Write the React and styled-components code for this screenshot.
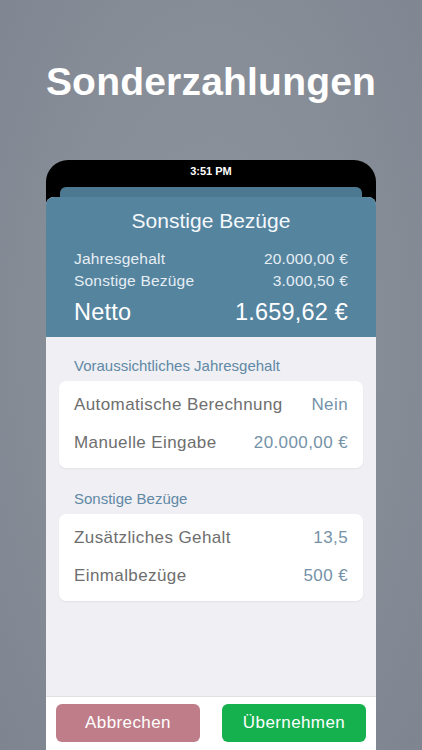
import React from 'react';
import styled, { createGlobalStyle } from 'styled-components';

const GlobalStyle = createGlobalStyle`
  html, body {
    margin: 0;
    padding: 0;
    height: 100%;
  }
  body {
    background: radial-gradient(ellipse at 50% 45%, #8e949e 0%, #878d97 55%, #7f8590 100%);
    font-family: "Liberation Sans", Arial, sans-serif;
    overflow: hidden;
  }
`;

const Page = styled.div`
  width: 422px;
  height: 750px;
  display: flex;
  flex-direction: column;
  align-items: center;
  overflow: hidden;
`;

const Headline = styled.h1`
  margin: 0;
  padding-top: 59px;
  height: 160px;
  flex-shrink: 0;
  box-sizing: border-box;
  font-family: "Liberation Sans", Arial, sans-serif;
  font-weight: 700;
  font-size: 39px;
  letter-spacing: 0.2px;
  color: #ffffff;
  line-height: 46px;
`;

const Phone = styled.div`
  width: 330px;
  flex: 1;
  background: #000;
  border-radius: 22px 22px 0 0;
  display: flex;
  flex-direction: column;
  overflow: hidden;
`;

const StatusBar = styled.div`
  height: 27px;
  display: flex;
  align-items: center;
  justify-content: center;
  color: #fff;
  font-size: 11px;
  font-weight: 700;
  padding-bottom: 6px;
  box-sizing: border-box;
`;

const BackCard = styled.div`
  height: 10px;
  margin: 0 14px;
  background: #4d7891;
  border-radius: 6px 6px 0 0;
`;

const Sheet = styled.div`
  flex: 1;
  display: flex;
  flex-direction: column;
  background: #efeff4;
  border-radius: 8px 8px 0 0;
  overflow: hidden;
`;

const Header = styled.div`
  height: 140px;
  flex-shrink: 0;
  background: #55849f;
  padding: 11px 28px 0;
  box-sizing: border-box;
  color: #fff;
  display: flex;
  flex-direction: column;
`;

const SheetTitle = styled.div`
  text-align: center;
  font-size: 21px;
  line-height: 26px;
  margin-bottom: 14px;
  color: #f4f8fb;
`;

const SummaryRow = styled.div`
  display: flex;
  justify-content: space-between;
  align-items: center;
  font-size: ${p => (p.$big ? '23.5px' : '15.5px')};
  line-height: ${p => (p.$big ? '30px' : '22px')};
  margin-top: ${p => (p.$big ? '5px' : '0')};
  letter-spacing: 0.2px;
  color: ${p => (p.$big ? '#ffffff' : '#e6eef4')};
`;

const Body = styled.div`
  flex: 1;
  padding: 17px 13px 0;
  display: flex;
  flex-direction: column;
`;

const SectionLabel = styled.div`
  font-size: 15px;
  line-height: 24px;
  color: #5f89a5;
  padding-left: 15px;
  margin-bottom: 3px;
`;

const Card = styled.div`
  background: #fff;
  border-radius: 7px;
  box-shadow: 0 1px 2px rgba(0, 0, 0, 0.06);
  padding: 5px 15px 6px;
  margin-bottom: 19px;
`;

const Row = styled.div`
  height: 38px;
  display: flex;
  justify-content: space-between;
  align-items: center;
  font-size: 17px;
  letter-spacing: 0.4px;
`;

const Label = styled.span`
  color: #6e6e6e;
`;

const Value = styled.span`
  color: #7592a8;
`;

const Footer = styled.div`
  height: 54px;
  flex-shrink: 0;
  background: #fff;
  border-top: 1px solid #e2e2e6;
  display: flex;
  gap: 22px;
  padding: 7px 10px 0;
  box-sizing: border-box;
`;

const Button = styled.button`
  flex: 1;
  height: 38px;
  border: none;
  border-radius: 6px;
  background: ${p => p.$bg};
  color: #fff;
  font-family: "Liberation Sans", Arial, sans-serif;
  font-size: 17px;
  letter-spacing: 0.4px;
`;

export default function App() {
  return (
    <>
      <GlobalStyle />
      <Page>
        <Headline>Sonderzahlungen</Headline>
        <Phone>
          <StatusBar>3:51 PM</StatusBar>
          <BackCard />
          <Sheet>
            <Header>
              <SheetTitle>Sonstige Bezüge</SheetTitle>
              <SummaryRow><span>Jahresgehalt</span><span>20.000,00 €</span></SummaryRow>
              <SummaryRow><span>Sonstige Bezüge</span><span>3.000,50 €</span></SummaryRow>
              <SummaryRow $big><span>Netto</span><span>1.659,62 €</span></SummaryRow>
            </Header>
            <Body>
              <SectionLabel>Voraussichtliches Jahresgehalt</SectionLabel>
              <Card>
                <Row><Label>Automatische Berechnung</Label><Value>Nein</Value></Row>
                <Row><Label>Manuelle Eingabe</Label><Value>20.000,00 €</Value></Row>
              </Card>
              <SectionLabel>Sonstige Bezüge</SectionLabel>
              <Card>
                <Row><Label>Zusätzliches Gehalt</Label><Value>13,5</Value></Row>
                <Row><Label>Einmalbezüge</Label><Value>500 €</Value></Row>
              </Card>
            </Body>
            <Footer>
              <Button $bg="#bf7d89">Abbrechen</Button>
              <Button $bg="#15b14f">Übernehmen</Button>
            </Footer>
          </Sheet>
        </Phone>
      </Page>
    </>
  );
}
